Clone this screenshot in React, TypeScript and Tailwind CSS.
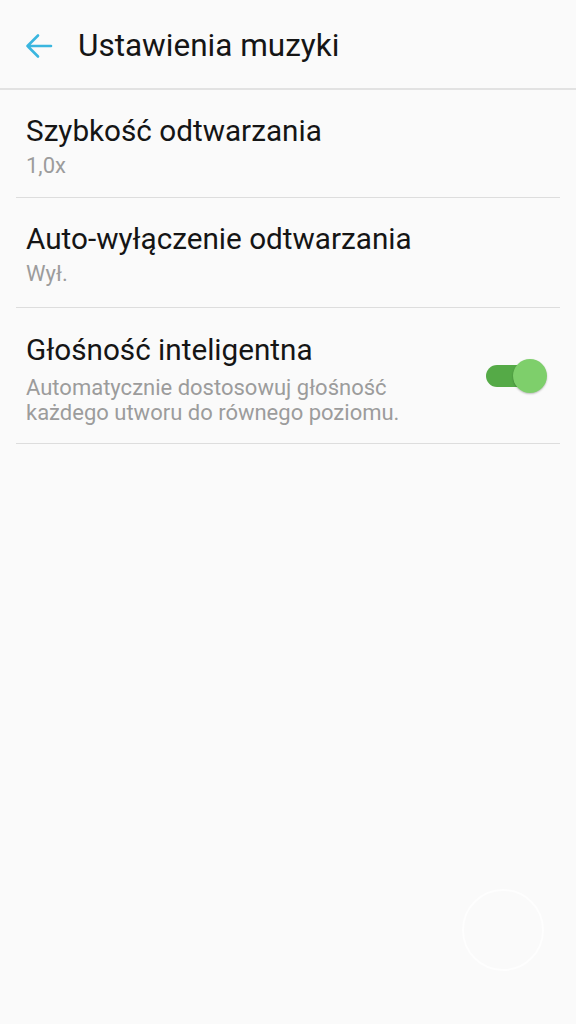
import React from 'react'

const font = { fontFamily: 'Roboto, "Noto Sans", sans-serif' }

const ROWS = [
  { title: 'Szybkość odtwarzania', sub: '1,0x', h: 'h-[108px]' },
  { title: 'Auto-wyłączenie odtwarzania', sub: 'Wył.', h: 'h-[110px]' },
]

function Toggle() {
  return (
    <div className="relative w-[61px] h-[34px] flex items-center">
      <div className="w-[54px] h-[22px] rounded-full bg-[#55aa47]" />
      <div className="absolute right-0 top-0 w-[34px] h-[34px] rounded-full bg-[#7ecf6b] shadow-[0_1px_2px_rgba(0,0,0,0.25)]" />
    </div>
  )
}

export default function App() {
  return (
    <div style={font} className="w-[576px] h-[1024px] bg-[#fafafa] relative overflow-hidden">
      {/* app bar */}
      <div className="h-[90px] flex items-center border-b-2 border-[#e2e2e2]">
        <svg className="ml-[25px] mt-[4px]" width="28" height="26" viewBox="0 0 28 26" fill="none" stroke="#3ab6df" strokeWidth="2.6" strokeLinecap="round" strokeLinejoin="round">
          <path d="M26 13H2.5M13 2.5L2.5 13 13 23.5" />
        </svg>
        <h1 className="ml-[25px] mt-[4px] text-[31.5px] text-[#151515] leading-none">Ustawienia muzyki</h1>
      </div>

      <div className="px-[16px]">
        {ROWS.map((r) => (
          <div key={r.title} className={`${r.h} border-b border-[#dddddd] px-[10px] pt-[24px]`}>
            <div className="text-[29.7px] text-[#151515] leading-[34px]">{r.title}</div>
            <div className="text-[22px] text-[#9c9c9c] leading-[26px] mt-[5px]">{r.sub}</div>
          </div>
        ))}
        <div className="h-[136px] border-b border-[#dddddd] pl-[10px] pr-[13px] pt-[25px] flex items-start justify-between">
          <div>
            <div className="text-[29.7px] text-[#151515] leading-[34px]">Głośność inteligentna</div>
            <div className="text-[22px] text-[#9c9c9c] leading-[25px] mt-[8px]">
              Automatycznie dostosowuj głośność
              <br />
              każdego utworu do równego poziomu.
            </div>
          </div>
          <div className="mt-[26px]">
            <Toggle />
          </div>
        </div>
      </div>

      {/* faint watermark */}
      <div className="absolute left-[462px] top-[889px] w-[82px] h-[82px] rounded-full border-2 border-white/70" />
    </div>
  )
}
